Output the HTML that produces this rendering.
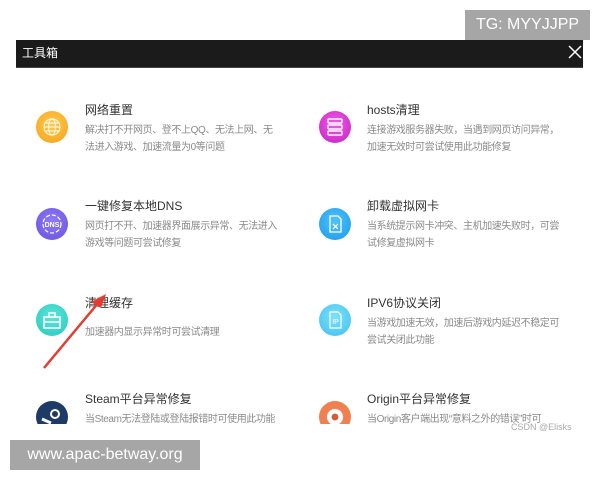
<!DOCTYPE html>
<html><head><meta charset="utf-8"><style>
body{margin:0;width:600px;height:480px;background:#fff;position:relative;overflow:hidden;font-family:"Liberation Sans","Noto Sans CJK SC",sans-serif}
.a{position:absolute}
.hdr{left:16px;top:40px;width:567px;height:27px;background:#1b1b1b;color:#fff;font-size:12px;line-height:27px;text-indent:6px;border-bottom:1px solid #444}
.t{font-size:12px;color:#333;white-space:nowrap}
.d{font-size:10px;letter-spacing:-0.4px;color:#8a8a8a;line-height:17px;white-space:nowrap}
.ic{width:32px;height:32px;border-radius:50%}
.ic svg{position:absolute;left:0;top:0}
.clip{left:0;top:67px;width:600px;height:357px;overflow:hidden}
</style></head><body>
<div class="a" style="left:465px;top:10px;width:125px;height:30px;background:#a6a6a6;color:#fff;font-size:16px;line-height:30px;text-align:center">TG: MYYJJPP</div>
<div class="a hdr">工具箱</div>
<svg class="a" style="left:568px;top:45px" width="14" height="14"><path d="M1 1L13 13M13 1L1 13" stroke="#fff" stroke-width="1.5"/></svg>
<div class="a clip">
 <div class="a ic" style="left:36px;top:44px;background:radial-gradient(circle at 50% 40%,#ffc94a,#f7a21b)"><svg width="32" height="32" fill="none" stroke="#fff" stroke-opacity=".8" stroke-width="1.2"><circle cx="16" cy="16" r="8"/><ellipse cx="16" cy="16" rx="3.5" ry="8"/><path d="M8 16H24M9 12H23M9 20H23"/></svg></div>
 <div class="a t" style="left:85px;top:34px">网络重置</div>
 <div class="a d" style="left:85px;top:55px">解决打不开网页、登不上QQ、无法上网、无<br>法进入游戏、加速流量为0等问题</div>
 <div class="a ic" style="left:319px;top:44px;background:radial-gradient(circle at 50% 40%,#f05ce8,#c51fc0)"><svg width="32" height="32" fill="none" stroke="#fff" stroke-width="1.4"><rect x="9" y="8" width="14" height="4" rx="1"/><rect x="9" y="14" width="14" height="4" rx="1"/><rect x="9" y="20" width="14" height="4" rx="1"/></svg></div>
 <div class="a t" style="left:367px;top:34px">hosts清理</div>
 <div class="a d" style="left:367px;top:55px">连接游戏服务器失败，当遇到网页访问异常，<br>加速无效时可尝试使用此功能修复</div>

 <div class="a ic" style="left:36px;top:141px;background:radial-gradient(circle at 50% 40%,#8d7cf5,#6a4fe0)"><svg width="32" height="32"><circle cx="16" cy="16" r="9" fill="none" stroke="#fff" stroke-width="1.2" stroke-dasharray="4 2"/><text x="16" y="19" font-size="7" font-weight="bold" fill="#fff" text-anchor="middle" font-family="Liberation Sans">DNS</text></svg></div>
 <div class="a t" style="left:85px;top:130px">一键修复本地DNS</div>
 <div class="a d" style="left:85px;top:151px">网页打不开、加速器界面展示异常、无法进入<br>游戏等问题可尝试修复</div>
 <div class="a ic" style="left:319px;top:141px;background:radial-gradient(circle at 50% 40%,#4fc3fb,#1a98ea)"><svg width="32" height="32" fill="none" stroke="#fff" stroke-width="1.3"><path d="M11 8H19L22 11V24H11Z"/><path d="M14 16L19 21M19 16L14 21"/></svg></div>
 <div class="a t" style="left:367px;top:130px">卸载虚拟网卡</div>
 <div class="a d" style="left:367px;top:151px">当系统提示网卡冲突、主机加速失败时，可尝<br>试修复虚拟网卡</div>

 <div class="a ic" style="left:36px;top:237px;background:radial-gradient(circle at 50% 40%,#5ee6dc,#25c7bd)"><svg width="32" height="32" fill="none" stroke="#fff" stroke-width="1.6"><rect x="8" y="13" width="16" height="11"/><path d="M13 13V9H19V13M8 18H24"/></svg></div>
 <div class="a t" style="left:85px;top:227px">清理缓存</div>
 <div class="a d" style="left:85px;top:257px">加速器内显示异常时可尝试清理</div>
 <div class="a ic" style="left:319px;top:237px;background:radial-gradient(circle at 50% 40%,#7fe0fb,#3cc0f0)"><svg width="32" height="32"><path d="M11 8H19L22 11V24H11Z" fill="none" stroke="#fff" stroke-width="1.2"/><text x="16.5" y="20" font-size="7" fill="#fff" text-anchor="middle" font-family="Liberation Sans">IP</text></svg></div>
 <div class="a t" style="left:367px;top:227px">IPV6协议关闭</div>
 <div class="a d" style="left:367px;top:248px">当游戏加速无效，加速后游戏内延迟不稳定可<br>尝试关闭此功能</div>

 <div class="a ic" style="left:36px;top:334px;background:#1e3a66"><svg width="32" height="32"><circle cx="19" cy="13" r="4" fill="none" stroke="#fff" stroke-width="2"/><path d="M6 18L15 22" stroke="#fff" stroke-width="3"/></svg></div>
 <div class="a t" style="left:85px;top:323px">Steam平台异常修复</div>
 <div class="a d" style="left:85px;top:344px">当Steam无法登陆或登陆报错时可使用此功能</div>
 <div class="a ic" style="left:319px;top:334px;background:radial-gradient(circle at 50% 50%,#d45a38 14%,#fff 16%,#fff 34%,#f08050 37%)"></div>
 <div class="a t" style="left:367px;top:323px">Origin平台异常修复</div>
 <div class="a d" style="left:367px;top:344px">当Origin客户端出现“意料之外的错误”时可</div>
</div>
<svg class="a" style="left:0;top:0" width="600" height="480"><path d="M44 368L99 302" stroke="#e53a2f" stroke-width="2.5"/><path d="M106 294L91 302L101 308Z" fill="#e53a2f"/></svg>
<div class="a" style="left:511px;top:422px;font-size:9px;color:#aaa">CSDN @Elisks</div>
<div class="a" style="left:10px;top:440px;width:190px;height:30px;background:#a6a6a6;color:#fff;font-size:16px;line-height:30px;text-align:center">www.apac-betway.org</div>
</body></html>
